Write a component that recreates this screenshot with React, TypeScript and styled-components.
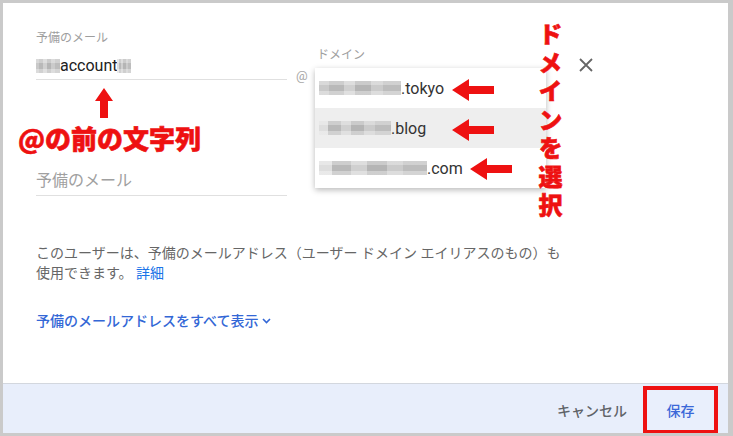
import styled, {createGlobalStyle} from "styled-components";

const GlobalStyle = createGlobalStyle`
    html, body {
        margin: 0;
        padding: 0;
        background: #ffffff;
    }

    body {
        font-family: Roboto, "Noto Sans CJK JP", "Noto Sans", sans-serif;
    }
`

const StyledFrame = styled.div`
    position: relative;

    display: flex;
    flex-direction: column;

    box-sizing: border-box;
    width: 733px;
    height: 436px;

    border: 3px solid #cacaca;
    border-right-width: 5px;

    background-color: #ffffff;
    overflow: hidden;
`

const StyledContent = styled.div`
    flex: 1;

    padding: 27px 33px 0;
`

const StyledFieldRow = styled.div`
    display: flex;
    flex-direction: row;
    align-items: flex-start;
`

const StyledField = styled.div<{ $width: number, $top?: number }>`
    display: flex;
    flex-direction: column;

    width: ${props => props.$width}px;
    margin-top: ${props => props.$top || 0}px;
`

const StyledLabel = styled.div`
    height: 16px;

    font-size: 12px;
    line-height: 16px;
    color: #9e9e9e;
    white-space: nowrap;
`

const StyledInput = styled.div<{ $placeholder?: boolean }>`
    display: flex;
    flex-direction: row;
    align-items: center;

    box-sizing: border-box;
    height: 34px;
    padding-top: 6px;
    padding-bottom: ${props => props.$placeholder ? 6 : 0}px;

    border-bottom: 1px solid #e0e0e0;

    font-size: 16px;
    color: ${props => props.$placeholder ? "#a0a0a0" : "#212121"};
    white-space: nowrap;
`

const StyledMosaic = styled.span<{ $width: number, $light?: boolean }>`
    display: inline-block;

    width: ${props => props.$width}px;
    height: 14px;

    background:
        linear-gradient(0deg, rgba(255, 255, 255, .35) 0 30%, transparent 30% 70%, rgba(255, 255, 255, .3) 70% 100%),
        linear-gradient(90deg,
            ${props => props.$light ? "#dedede" : "#c9c9c9"} 0 12%,
            #b9b9b9 12% 30%,
            #d0d0d0 30% 44%,
            #b5b5b5 44% 63%,
            #cbcbcb 63% 78%,
            #bdbdbd 78% 100%);
    filter: blur(0.6px);
`

const StyledAt = styled.div`
    margin: 38px 0 0 9px;

    width: 12px;

    font-size: 13px;
    line-height: 16px;
    color: #a8a8a8;
`

const StyledDomainField = styled.div`
    position: relative;

    width: 250px;
    margin: 17px 0 0 9px;
`

const StyledMenu = styled.div`
    position: absolute;
    top: 21px;
    left: -2px;

    display: flex;
    flex-direction: column;

    width: 231px;

    background-color: #ffffff;
    box-shadow: 0 2px 6px rgba(0, 0, 0, .28);
`

const StyledMenuItem = styled.div<{ $active?: boolean }>`
    display: flex;
    flex-direction: row;
    align-items: center;

    height: 40px;
    padding-left: 4px;

    font-size: 16px;
    color: #333333;

    background-color: ${props => props.$active ? "#eeeeee" : "transparent"};
`

const StyledClose = styled.svg`
    margin: 28px 0 0 12px;

    width: 14px;
    height: 14px;
`

const StyledNote = styled.p`
    margin: 47px 0 0;

    font-size: 14px;
    line-height: 20px;
    color: #666666;
`

const StyledLink = styled.a`
    color: #1a73e8;
    text-decoration: none;
`

const StyledShowAll = styled.div`
    display: flex;
    flex-direction: row;
    align-items: center;
    gap: 4px;

    margin-top: 28px;

    font-size: 14px;
    line-height: 20px;
    font-weight: 500;
    color: #3367d6;
`

const StyledFooter = styled.div`
    display: flex;
    flex-direction: row;
    justify-content: flex-end;
    align-items: center;
    gap: 16px;

    box-sizing: border-box;
    height: 50px;
    padding: 2px 10px 0 0;

    border-top: 1px solid #d3d7de;

    background-color: #e8eefb;
`

const StyledCancel = styled.div`
    font-size: 14px;
    font-weight: 500;
    color: #5f6368;
`

const StyledSave = styled.div`
    display: flex;
    justify-content: center;
    align-items: center;

    box-sizing: border-box;
    width: 75px;
    height: 48px;

    border: 4px solid #ee1111;

    font-size: 14px;
    font-weight: 500;
    color: #3b68d8;
    background-color: #e9effc;
`

const StyledCallout = styled.div<{ $x: number, $y: number }>`
    position: absolute;
    left: ${props => props.$x}px;
    top: ${props => props.$y}px;

    font-family: "Noto Sans CJK JP", sans-serif;
    font-weight: 900;
    color: #ee1111;
    -webkit-text-stroke: 0.6px #ee1111;
    white-space: nowrap;
`

const StyledCalloutRow = styled(StyledCallout)`
    font-size: 26px;
    line-height: 30px;
`

const StyledCalloutColumn = styled(StyledCallout)`
    writing-mode: vertical-rl;

    font-size: 24px;
    line-height: 24px;
    letter-spacing: 4.5px;
`

const StyledArrow = styled.svg<{ $x: number, $y: number }>`
    position: absolute;
    left: ${props => props.$x}px;
    top: ${props => props.$y}px;
`

const LeftArrow = ({x, y}: { x: number, y: number }) => (
	<StyledArrow $x={x} $y={y} width="42" height="22" viewBox="0 0 42 22">
		<polygon points="0,11 17,0 17,7 42,7 42,15 17,15 17,22" fill="#ee1111"/>
	</StyledArrow>
)

const domains = [
	{mosaic: 82, tld: ".tokyo"},
	{mosaic: 72, tld: ".blog", active: true, light: true},
	{mosaic: 108, tld: ".com", light: true},
]

export default function App() {
	return (
		<>
			<GlobalStyle/>
			<StyledFrame>
				<StyledContent>
					<StyledFieldRow>
						<StyledField $width={251}>
							<StyledLabel>予備のメール</StyledLabel>
							<StyledInput>
								<StyledMosaic $width={24}/>
								account
								<StyledMosaic $width={14} $light/>
							</StyledInput>
						</StyledField>

						<StyledAt>@</StyledAt>

						<StyledDomainField>
							<StyledLabel>ドメイン</StyledLabel>
							<StyledMenu>
								{domains.map((domain, index) => (
									<StyledMenuItem key={index} $active={domain.active}>
										<StyledMosaic $width={domain.mosaic} $light={domain.light}/>
										{domain.tld}
									</StyledMenuItem>
								))}
							</StyledMenu>
						</StyledDomainField>

						<StyledClose viewBox="0 0 14 14">
							<path d="M1 1 L13 13 M13 1 L1 13" stroke="#666" strokeWidth="1.8" fill="none"/>
						</StyledClose>
					</StyledFieldRow>

					<StyledField $width={251} $top={78}>
						<StyledInput $placeholder>予備のメール</StyledInput>
					</StyledField>

					<StyledNote>
						このユーザーは、予備のメールアドレス（ユーザー ドメイン エイリアスのもの）も<br/>
						使用できます。 <StyledLink>詳細</StyledLink>
					</StyledNote>

					<StyledShowAll>
						予備のメールアドレスをすべて表示
						<svg width="9" height="6" viewBox="0 0 9 6">
							<polyline points="1,1 4.5,4.5 8,1" stroke="#3367d6" strokeWidth="1.6" fill="none"/>
						</svg>
					</StyledShowAll>
				</StyledContent>

				<StyledFooter>
					<StyledCancel>キャンセル</StyledCancel>
					<StyledSave>保存</StyledSave>
				</StyledFooter>

				<StyledArrow $x={92} $y={85} width="18" height="30" viewBox="0 0 18 30">
					<polygon points="9,0 18,13 13,13 13,30 5,30 5,13 0,13" fill="#ee1111"/>
				</StyledArrow>
				<StyledCalloutRow $x={15} $y={120}>@の前の文字列</StyledCalloutRow>

				<LeftArrow x={449} y={76}/>
				<LeftArrow x={449} y={116}/>
				<LeftArrow x={467} y={155}/>
				<StyledCalloutColumn $x={535} $y={19}>ドメインを選択</StyledCalloutColumn>
			</StyledFrame>
		</>
	)
}
